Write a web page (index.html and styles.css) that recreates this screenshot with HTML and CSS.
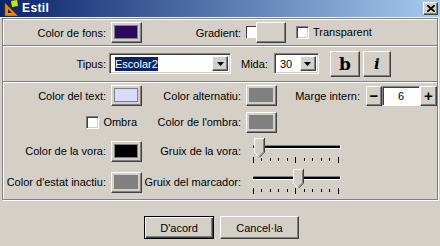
FILE: index.html
```html
<!DOCTYPE html>
<html lang="ca">
<head>
  <meta charset="UTF-8" />
  <title>Estil</title>
  <link rel="stylesheet" href="styles.css">
</head>
<body>
  <div class="titlebar">
    <svg class="app-icon" width="16" height="16" viewBox="0 0 16 16">
      <path d="M2 3L2 16L15 16Z M5 9L5 13L9 13Z" fill="#f08a00" fill-rule="evenodd"/>
      <path d="M2 3L2 16L15 16Z" fill="none" stroke="#a04800" stroke-width="0.6"/>
      <path d="M8 1L14 0L15 6L9 7Z" fill="#c6e800"/>
    </svg>
    <span class="title">Estil</span>
    <span class="close">
      <svg width="8" height="7" viewBox="0 0 8 7"><path d="M0 0L8 7M8 0L0 7" stroke="#000" stroke-width="1.7"/></svg>
    </span>
  </div>

  <div class="frame">
    <div class="sec sec-bg">
      <span class="lbl lbl-main">Color de fons:</span>
      <span class="swatch"><i class="c-fons"></i></span>
      <span class="lbl lbl-grad">Gradient:</span>
      <span class="grad"><span class="grad-box"></span><span class="grad-btn raised"></span></span>
      <span class="check"></span>
      <span class="check-text">Transparent</span>
    </div>

    <div class="sec sec-font">
      <span class="lbl lbl-main">Tipus:</span>
      <span class="combo combo-font">
        <span class="combo-text"><span class="sel">Escolar2</span></span>
        <span class="drop raised"><svg width="7" height="4" viewBox="0 0 7 4"><path d="M0 0H7L3.5 4Z"/></svg></span>
      </span>
      <span class="lbl-mida">Mida:</span>
      <span class="combo combo-size">
        <span class="combo-text">30</span>
        <span class="drop raised"><svg width="7" height="4" viewBox="0 0 7 4"><path d="M0 0H7L3.5 4Z"/></svg></span>
      </span>
      <span class="fmt fmt-b raised">b</span>
      <span class="fmt fmt-i raised">i</span>
    </div>

    <div class="sec-grid">
      <span class="lbl">Color del text:</span>
      <span class="swatch"><i class="c-text"></i></span>
      <span class="lbl">Color alternatiu:</span>
      <span class="swatch"><i class="c-grey"></i></span>
      <span class="lbl lbl-marge">Marge intern:</span>
      <span class="spin">
        <span class="spin-btn raised">&minus;</span>
        <span class="spin-val">6</span>
        <span class="spin-btn raised">+</span>
      </span>

      <span class="lbl lbl-ombra"><span class="check"></span><span class="check-text">Ombra</span></span>
      <span class="lbl">Color de l'ombra:</span>
      <span class="swatch"><i class="c-grey"></i></span>
      <span></span>
      <span></span>

      <span class="lbl">Color de la vora:</span>
      <span class="swatch"><i class="c-black"></i></span>
      <span class="lbl">Gruix de la vora:</span>
      <svg class="slider" width="90" height="26" viewBox="0 0 90 26">
        <rect x="0" y="7" width="87" height="1" fill="#808080"/>
        <rect x="0" y="8" width="87" height="2" fill="#000"/>
        <rect x="0" y="10" width="88" height="1" fill="#fff"/>
        <rect x="87" y="7" width="1" height="4" fill="#fff"/>
        <path d="M0.5 19v6M42.5 19v6M85.5 19v6M8.5 20v3M17.5 20v3M25.5 20v3M34.5 20v3M51.5 20v3M59.5 20v3M68.5 20v3M76.5 20v3" stroke="#000"/>
        <g transform="translate(1,0)">
          <path d="M0 0H11V14L5.5 19.5L0 14Z" fill="#d4d0c8"/>
          <path d="M0.5 14.5V0.5H10" stroke="#fff" fill="none"/>
          <path d="M10.5 0V14.2L5.5 19.2" stroke="#404040" fill="none"/>
          <path d="M9.5 1V13.8L5.5 17.8" stroke="#808080" fill="none"/>
          <path d="M0.5 14.5L5 19" stroke="#fff" fill="none"/>
        </g>
      </svg>
      <span></span>

      <span class="lbl">Color d'estat inactiu:</span>
      <span class="swatch"><i class="c-grey"></i></span>
      <span class="lbl">Gruix del marcador:</span>
      <svg class="slider" width="90" height="26" viewBox="0 0 90 26">
        <rect x="0" y="7" width="87" height="1" fill="#808080"/>
        <rect x="0" y="8" width="87" height="2" fill="#000"/>
        <rect x="0" y="10" width="88" height="1" fill="#fff"/>
        <rect x="87" y="7" width="1" height="4" fill="#fff"/>
        <path d="M0.5 19v6M42.5 19v6M85.5 19v6M8.5 20v3M17.5 20v3M25.5 20v3M34.5 20v3M51.5 20v3M59.5 20v3M68.5 20v3M76.5 20v3" stroke="#000"/>
        <g transform="translate(40,0)">
          <path d="M0 0H11V14L5.5 19.5L0 14Z" fill="#d4d0c8"/>
          <path d="M0.5 14.5V0.5H10" stroke="#fff" fill="none"/>
          <path d="M10.5 0V14.2L5.5 19.2" stroke="#404040" fill="none"/>
          <path d="M9.5 1V13.8L5.5 17.8" stroke="#808080" fill="none"/>
          <path d="M0.5 14.5L5 19" stroke="#fff" fill="none"/>
        </g>
      </svg>
      <span></span>
    </div>
  </div>

  <div class="actions">
    <button class="btn btn-ok">D'acord</button>
    <button class="btn btn-cancel">Cancel·la</button>
  </div>
</body>
</html>
```

FILE: styles.css
```css
* {
  box-sizing: border-box;
}
body {
  margin: 0;
  width: 440px;
  height: 246px;
  overflow: hidden;
  background: #d4d0c8;
  font-family: "Liberation Sans", Arial, sans-serif;
  font-size: 11px;
  color: #000;
}
.titlebar {
  height: 18px;
  display: flex;
  align-items: center;
  padding: 0 2px 1px 3px;
  background: linear-gradient(to right, #0a246a, #a6caf0);
  border-bottom: 1px solid #f4f4f0;
}
.title {
  color: #fff;
  font-weight: bold;
  font-size: 12px;
  margin-left: 3px;
  letter-spacing: 0.4px;
}
.close {
  margin-left: auto;
  width: 15px;
  height: 13px;
  display: flex;
  align-items: center;
  justify-content: center;
  background: #d4d0c8;
  border: 1px solid;
  border-color: #fff #404040 #404040 #fff;
  box-shadow: inset -1px -1px #808080;
}

/* etched group frame */
.frame {
  margin: 0 2px;
  border: 1px solid #808080;
  box-shadow: inset 1px 1px #fff, 1px 1px #fff;
}
.sec {
  display: flex;
  align-items: center;
}
.sec + .sec,
.sec + .sec-grid {
  border-top: 1px solid #808080;
  box-shadow: inset 0 1px #fff;
}
.sec-bg {
  height: 26px;
  align-items: flex-start;
  padding-top: 3px;
}
.sec-font {
  height: 36px;
}
.lbl {
  display: flex;
  justify-content: flex-end;
  align-items: center;
  padding-right: 5px;
  white-space: nowrap;
}
.lbl-main {
  width: 108px;
}
.lbl-grad {
  width: 104px;
  height: 21px;
}
.sec-bg .lbl-main {
  height: 21px;
}

/* colour buttons */
.swatch {
  display: block;
  width: 31px;
  height: 21px;
  padding: 2px 3px 3px 2px;
  background: #d4d0c8;
  border: 1px solid;
  border-color: #fff #404040 #404040 #fff;
  box-shadow: inset -1px -1px #808080;
}
.swatch i {
  display: block;
  height: 100%;
  border: 1px solid #808080;
}
.c-fons { background: #2d0a5e; }
.c-text { background: #dadaff; }
.c-grey { background: #808080; }
.c-black { background: #000; }

.raised {
  background: #d4d0c8;
  border: 1px solid;
  border-color: #fff #404040 #404040 #fff;
  box-shadow: inset -1px -1px #808080;
}
.grad {
  display: flex;
  align-items: flex-start;
}
.grad-box {
  width: 12px;
  height: 12px;
  margin-top: 4px;
  background: #fff;
  border-top: 1px solid #404040;
  border-left: 1px solid #404040;
}
.grad-btn {
  width: 30px;
  height: 21px;
  margin-left: -2px;
}
.check {
  width: 13px;
  height: 13px;
  flex: none;
  background: #fff;
  border: 1px solid;
  border-color: #808080 #fff #fff #808080;
  box-shadow: inset 1px 1px #404040, inset -1px -1px #d4d0c8;
}
.sec-bg .check {
  margin: 4px 0 0 10px;
}
.check-text {
  margin-left: 4px;
}
.sec-bg .check-text {
  line-height: 21px;
}

/* font row */
.combo {
  display: flex;
  height: 21px;
  padding: 2px;
  background: #fff;
  border: 1px solid;
  border-color: #808080 #fff #fff #808080;
  box-shadow: inset 1px 1px #404040, inset -1px -1px #d4d0c8;
}
.combo-font {
  width: 122px;
  margin-left: -2px;
}
.combo-size {
  width: 45px;
}
.combo-text {
  flex: 1;
  display: flex;
  align-items: center;
  padding-left: 3px;
}
.sel {
  background: #0a246a;
  color: #fff;
  line-height: 14px;
}
.drop {
  width: 16px;
  display: flex;
  align-items: center;
  justify-content: center;
}
.lbl-mida {
  margin: 0 6px 0 10px;
}
.fmt {
  height: 26px;
  display: flex;
  align-items: center;
  justify-content: center;
  font-family: "DejaVu Serif", "Liberation Serif", serif;
  font-weight: bold;
  font-size: 17px;
}
.fmt-b {
  width: 30px;
  margin-left: 11px;
}
.fmt-i {
  width: 28px;
  margin-left: 3px;
  font-style: italic;
  font-size: 15px;
}

/* main grid */
.sec-grid {
  display: grid;
  grid-template-columns: 108px 31px 104px 50px 70px 71px;
  grid-template-rows: 21px 22px 26px 26px;
  row-gap: 5px;
  align-items: center;
  padding: 3px 0 4px;
}
.lbl-marge {
  padding-right: 6px;
}
.lbl-ombra {
  grid-column: 1 / 3;
}
.lbl-ombra .check-text {
  margin-left: 4px;
}
.slider {
  grid-column: 4 / 6;
  margin-left: 7px;
  display: block;
}
.spin {
  display: flex;
  height: 20px;
}
.spin-btn {
  width: 16px;
  display: flex;
  align-items: center;
  justify-content: center;
  font-weight: bold;
  font-size: 15px;
}
.spin-btn:last-child {
  width: 17px;
}
.spin-val {
  width: 38px;
  display: flex;
  align-items: center;
  justify-content: center;
  background: #fff;
  border: 1px solid;
  border-color: #808080 #fff #fff #808080;
  box-shadow: inset 1px 1px #404040;
}

/* dialog buttons */
.actions {
  display: flex;
  justify-content: center;
  gap: 6px;
  padding: 16px 0 0 3px;
}
.btn {
  height: 23px;
  padding: 0;
  font-family: inherit;
  font-size: 11px;
  color: #000;
  background: #d4d0c8;
  border: 1px solid;
  border-color: #fff #404040 #404040 #fff;
  box-shadow: inset -1px -1px #808080;
}
.btn-ok {
  width: 70px;
  border-color: #000;
  box-shadow: inset 1px 1px #fff, inset -1px -1px #404040, inset -2px -2px #808080;
}
.btn-cancel {
  width: 79px;
}
```
